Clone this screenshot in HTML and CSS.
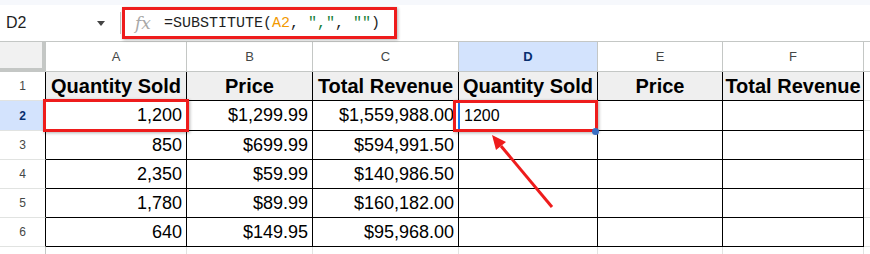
FILE: index.html
```html
<!DOCTYPE html>
<html lang="en">
<head>
    <meta charset="UTF-8">
    <meta name="viewport" content="width=device-width, initial-scale=1.0">
    <title>Sheet</title>
    <link rel="stylesheet" href="styles.css">
</head>
<body>
    <div class="app">
        <div class="top-strip"></div>

        <!-- Formula bar -->
        <div class="formula-bar">
            <div class="name-box">
                <span>D2</span>
                <span class="caret"></span>
            </div>
            <div class="divider"></div>
            <div class="fx">fx</div>
            <div class="formula">=SUBSTITUTE(<span class="ref">A2</span>, <span class="str">","</span>, <span class="str">""</span>)</div>
        </div>

        <!-- Grid -->
        <div class="sheet">
            <div class="corner"></div>
            <div class="col-head">A</div>
            <div class="col-head">B</div>
            <div class="col-head">C</div>
            <div class="col-head sel">D</div>
            <div class="col-head">E</div>
            <div class="col-head">F</div>
            <div class="col-head"></div>

            <div class="row-head">1</div>
            <div class="cell th">Quantity Sold</div>
            <div class="cell th">Price</div>
            <div class="cell th">Total Revenue</div>
            <div class="cell th">Quantity Sold</div>
            <div class="cell th">Price</div>
            <div class="cell th">Total Revenue</div>
            <div class="cell blank"></div>

            <div class="row-head sel">2</div>
            <div class="cell num">1,200</div>
            <div class="cell num">$1,299.99</div>
            <div class="cell num">$1,559,988.00</div>
            <div class="cell plain">1200</div>
            <div class="cell"></div>
            <div class="cell"></div>
            <div class="cell blank"></div>

            <div class="row-head">3</div>
            <div class="cell num">850</div>
            <div class="cell num">$699.99</div>
            <div class="cell num">$594,991.50</div>
            <div class="cell"></div>
            <div class="cell"></div>
            <div class="cell"></div>
            <div class="cell blank"></div>

            <div class="row-head">4</div>
            <div class="cell num">2,350</div>
            <div class="cell num">$59.99</div>
            <div class="cell num">$140,986.50</div>
            <div class="cell"></div>
            <div class="cell"></div>
            <div class="cell"></div>
            <div class="cell blank"></div>

            <div class="row-head">5</div>
            <div class="cell num">1,780</div>
            <div class="cell num">$89.99</div>
            <div class="cell num">$160,182.00</div>
            <div class="cell"></div>
            <div class="cell"></div>
            <div class="cell"></div>
            <div class="cell blank"></div>

            <div class="row-head">6</div>
            <div class="cell num">640</div>
            <div class="cell num">$149.95</div>
            <div class="cell num">$95,968.00</div>
            <div class="cell"></div>
            <div class="cell"></div>
            <div class="cell"></div>
            <div class="cell blank"></div>

            <div class="row-head last">7</div>
            <div class="cell blank"></div>
            <div class="cell blank"></div>
            <div class="cell blank"></div>
            <div class="cell blank"></div>
            <div class="cell blank"></div>
            <div class="cell blank"></div>
            <div class="cell blank"></div>
        </div>

        <!-- Annotations on top -->
        <div class="selection"></div>
        <div class="mark mark-formula"></div>
        <div class="mark mark-a2"></div>
        <div class="mark mark-d2"></div>
        <div class="handle"></div>
        <svg class="arrow" width="870" height="254" viewBox="0 0 870 254">
            <line x1="552" y1="207" x2="501" y2="146" stroke="#ee1c1c" stroke-width="3" />
            <polygon points="492,135 506,142 496,150" fill="#ee1c1c" />
        </svg>
    </div>
</body>
</html>
```

FILE: styles.css
```css
body {
    margin: 0;
    padding: 0;
    background-color: #fff;
    font-family: "Liberation Sans", Arial, sans-serif;
    overflow: hidden;
}

.app {
    position: relative;
    width: 870px;
    height: 254px;
    overflow: hidden;
}

.top-strip {
    height: 5px;
    background-color: #f6f8fc;
}

/* Formula bar */
.formula-bar {
    display: flex;
    align-items: center;
    height: 36px;
    background-color: #fff;
}

.name-box {
    display: flex;
    align-items: center;
    justify-content: space-between;
    width: 120px;
    box-sizing: border-box;
    padding: 0 15px 0 6px;
    font-size: 16px;
    color: #1f1f1f;
}

.caret {
    width: 0;
    height: 0;
    border-left: 4px solid transparent;
    border-right: 4px solid transparent;
    border-top: 5px solid #444;
}

.divider {
    width: 1px;
    height: 22px;
    background-color: #c4c7c5;
}

.fx {
    width: 18px;
    margin-left: 14px;
    font-family: "DejaVu Serif", serif;
    font-style: italic;
    font-size: 17px;
    color: #a8a8a8;
}

.formula {
    margin-left: 11px;
    font-family: "Liberation Mono", monospace;
    font-size: 15px;
    color: #1f1f1f;
    white-space: pre;
}

.ref {
    color: #f29900;
}

.str {
    color: #188038;
}

/* Grid */
.sheet {
    display: grid;
    grid-template-columns: 46px 141px 126px 146px 139px 125px 141px 60px;
    grid-template-rows: 30px 29px 30px 29px 29px 29px 29px 29px;
    border-top: 1px solid #c4c7c5;
}

.sheet > div {
    box-sizing: border-box;
    display: flex;
    align-items: center;
    overflow: hidden;
    white-space: nowrap;
}

.corner {
    background-color: #f1f1f1;
    border-right: 4px solid #c4c7c5;
    border-bottom: 4px solid #c4c7c5;
}

.col-head {
    justify-content: center;
    font-size: 13px;
    color: #444746;
    border-right: 1px solid #c4c7c5;
    border-bottom: 1px solid #c4c7c5;
}

.col-head.sel {
    background-color: #d3e3fd;
    color: #062e6f;
    font-weight: bold;
}

.row-head {
    justify-content: center;
    font-size: 12px;
    color: #444746;
    border-right: 1px solid #000;
    border-bottom: 1px solid #e1e3e1;
}

.row-head.sel {
    background-color: #d3e3fd;
    color: #062e6f;
    font-weight: bold;
}

.row-head.last {
    border-right-color: #c4c7c5;
    align-items: flex-start;
    padding-top: 5px;
}

.cell {
    border-right: 1px solid #000;
    border-bottom: 1px solid #000;
    font-size: 18px;
    color: #000;
}

.cell.th {
    justify-content: center;
    background-color: #efefef;
    font-weight: bold;
    font-size: 20px;
}

.cell.num {
    justify-content: flex-end;
    padding-right: 4px;
}

.cell.plain {
    padding-left: 5px;
    font-size: 16px;
}

.cell.blank {
    border-right: 1px solid #e1e3e1;
    border-bottom: 1px solid #e1e3e1;
}

/* Selection and annotations */
.selection {
    position: absolute;
    left: 458px;
    top: 100px;
    width: 140px;
    height: 31px;
    box-sizing: border-box;
    border: 2px solid #1a73e8;
}

.handle {
    position: absolute;
    left: 592px;
    top: 128px;
    width: 7px;
    height: 7px;
    border-radius: 50%;
    background-color: #3a6fc4;
}

.mark {
    position: absolute;
    box-sizing: border-box;
    border: 3px solid #ee1c1c;
    box-shadow: 1px 1px 3px rgba(0, 0, 0, 0.3);
}

.mark-formula {
    left: 122px;
    top: 7px;
    width: 275px;
    height: 32px;
}

.mark-a2 {
    left: 43px;
    top: 99px;
    width: 146px;
    height: 33px;
}

.mark-d2 {
    left: 453px;
    top: 100px;
    width: 145px;
    height: 32px;
}

.arrow {
    position: absolute;
    left: 0;
    top: 0;
}
```
